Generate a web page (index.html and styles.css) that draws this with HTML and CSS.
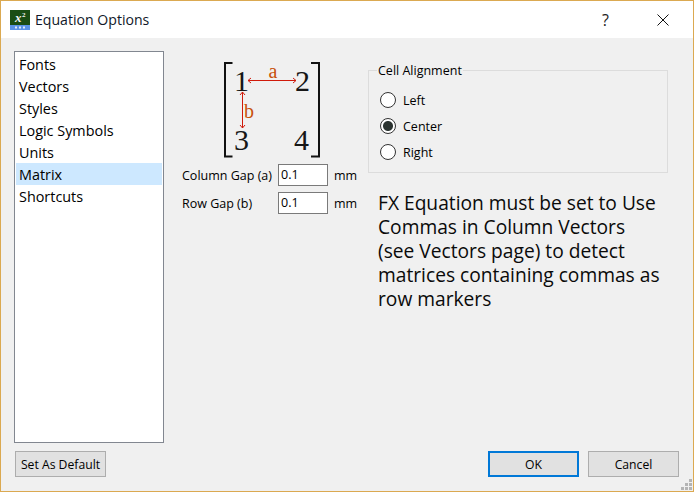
FILE: index.html
```html
<!DOCTYPE html>
<html lang="en">
<head>
<meta charset="utf-8">
<title>Equation Options</title>
<link rel="stylesheet" href="styles.css">
</head>
<body>
<div class="window">
  <header class="titlebar">
    <svg class="app-icon" width="20" height="20" viewBox="0 0 20 20">
      <rect width="20" height="15" fill="#1a4d14"/>
      <rect y="15" width="20" height="5" fill="#5a93e6"/>
      <text x="5" y="12" class="icon-x">x</text>
      <text x="12" y="7" class="icon-sup">2</text>
      <rect x="5" y="16.500" width="2" height="2" fill="#dfe9fa"/>
      <rect x="9" y="16.500" width="2" height="2" fill="#dfe9fa"/>
      <rect x="13" y="16.500" width="2" height="2" fill="#dfe9fa"/>
    </svg>
    <span class="title">Equation Options</span>
    <span class="help">?</span>
    <svg class="close" width="12" height="12" viewBox="0 0 12 12"><path d="M0.500 0.500L11.500 11.500M11.500 0.500L0.500 11.500" stroke="#111" fill="none"/></svg>
  </header>
  <main class="content">
    <ul class="list">
      <li>Fonts</li>
      <li>Vectors</li>
      <li>Styles</li>
      <li>Logic Symbols</li>
      <li>Units</li>
      <li class="selected">Matrix</li>
      <li>Shortcuts</li>
    </ul>
    <section class="matrix-col">
      <svg class="matrix" width="110" height="100" viewBox="0 0 110 100">
        <path d="M9.500 2H2V95.500H9.500M88 2H96V95.500H88" fill="none" stroke="#111" stroke-width="2"/>
        <text x="18.500" y="29.500" class="digit" text-anchor="middle">1</text>
        <text x="79.500" y="29.500" class="digit" text-anchor="middle">2</text>
        <text x="18.500" y="88.500" class="digit" text-anchor="middle">3</text>
        <text x="78.500" y="88.500" class="digit" text-anchor="middle">4</text>
        <text x="50" y="17" class="var" text-anchor="middle">a</text>
        <text x="26" y="57" class="var" text-anchor="middle">b</text>
        <path d="M25 19.500H73M28 17L25 19.500L28 22M70 17L73 19.500L70 22" fill="none" stroke="#d01a0a"/>
        <path d="M19.500 31V67M17 34L19.500 31L22 34M17 64L19.500 67L22 64" fill="none" stroke="#d01a0a"/>
      </svg>
      <div class="gap-row"><label>Column Gap (a)</label><span class="input">0.1</span><span class="unit">mm</span></div>
      <div class="gap-row"><label>Row Gap (b)</label><span class="input">0.1</span><span class="unit">mm</span></div>
    </section>
    <section class="options-col">
      <fieldset class="group">
        <legend>Cell Alignment</legend>
        <div class="radio"><span class="dot"></span>Left</div>
        <div class="radio"><span class="dot on"></span>Center</div>
        <div class="radio"><span class="dot"></span>Right</div>
      </fieldset>
      <p class="note">FX Equation must be set to Use Commas in Column Vectors (see Vectors page) to detect matrices containing commas as row markers</p>
    </section>
  </main>
  <footer class="footer">
    <button class="btn default-btn">Set As Default</button>
    <span class="spacer"></span>
    <button class="btn ok">OK</button>
    <button class="btn">Cancel</button>
  </footer>
  <svg class="grip" width="11" height="11" viewBox="0 0 11 11" fill="#b4b4b4">
    <rect x="8" y="0" width="3" height="3"/><rect x="4" y="4" width="3" height="3"/><rect x="8" y="4" width="3" height="3"/>
    <rect x="0" y="8" width="3" height="3"/><rect x="4" y="8" width="3" height="3"/><rect x="8" y="8" width="3" height="3"/>
  </svg>
</div>
</body>
</html>
```

FILE: styles.css
```css
html, body {
  margin: 0;
  padding: 0;
}
body {
  width: 694px;
  height: 492px;
  overflow: hidden;
  font-family: "Open Sans", "Noto Sans", sans-serif;
  color: #000;
}
.window {
  position: relative;
  box-sizing: border-box;
  width: 694px;
  height: 492px;
  border: 1px solid #dba951;
  background: #f0f0f0;
  display: flex;
  flex-direction: column;
}
.titlebar {
  height: 37px;
  flex: none;
  background: #fff;
  display: flex;
  align-items: center;
  padding-left: 9px;
}
.app-icon {
  flex: none;
  margin-top: 1px;
}
.icon-x {
  font: italic bold 13px "Liberation Serif", serif;
  fill: #f4f4f4;
}
.icon-sup {
  font: bold 7px "Liberation Serif", serif;
  fill: #f4f4f4;
}
.title {
  margin-left: 5px;
  font-size: 14.100px;
  color: #101828;
}
.help {
  margin-left: auto;
  font-size: 16px;
  color: #222;
  margin-right: 48px;
}
.close {
  margin-right: 24px;
  margin-top: 1px;
}
.content {
  flex: none;
  height: 392px;
  margin-top: 13px;
  display: flex;
  padding-left: 13px;
}
.list {
  list-style: none;
  box-sizing: border-box;
  width: 150px;
  height: 392px;
  margin: 0;
  padding: 1px 1px 0;
  background: #fff;
  border: 1px solid #828790;
  font-size: 14.400px;
  flex: none;
}
.list li {
  height: 22px;
  line-height: 23px;
  padding-left: 3px;
}
.list .selected {
  background: #cde8ff;
}
.matrix-col {
  width: 204px;
  flex: none;
  padding-left: 18px;
  box-sizing: border-box;
}
.matrix {
  display: block;
  margin: 10px 0 0 41px;
}
.digit {
  font: 30px "Liberation Serif", serif;
  fill: #161616;
}
.var {
  font: 20px "Liberation Serif", serif;
  fill: #c8500a;
}
.gap-row {
  display: flex;
  align-items: center;
  height: 22px;
  margin-bottom: 6px;
  font-size: 12.500px;
}
.gap-row:first-of-type {
  margin-top: 3px;
}
.gap-row label {
  width: 96px;
  flex: none;
}
.input {
  box-sizing: border-box;
  width: 50px;
  height: 22px;
  line-height: 20px;
  border: 1px solid #7a7a7a;
  background: #fff;
  padding-left: 2px;
  flex: none;
}
.unit {
  margin-left: 6px;
}
.options-col {
  width: 300px;
  flex: none;
}
.group {
  box-sizing: border-box;
  width: 300px;
  height: 111px;
  margin: 11px 0 0;
  padding: 0 0 0 11px;
  border: 1px solid #dcdcdc;
  font-size: 12.500px;
}
.group legend {
  padding: 0 1px;
  margin-left: -3px;
  line-height: 17px;
  margin-bottom: 8px;
}
.radio {
  display: flex;
  align-items: center;
  height: 26px;
}
.dot {
  box-sizing: border-box;
  width: 16px;
  height: 16px;
  border: 1px solid #333;
  border-radius: 50%;
  background: #fff;
  margin-right: 7px;
  flex: none;
}
.dot.on {
  background: radial-gradient(circle, #2b3330 0 4.500px, #fff 5.500px);
}
.note {
  margin: 18px 0 0 10px;
  width: 288px;
  font-size: 19.200px;
  line-height: 24px;
  color: #0a0a0a;
}
.footer {
  flex: none;
  display: flex;
  align-items: flex-start;
  margin-top: 8px;
  padding: 0 14px;
}
.spacer {
  flex: 1;
}
.btn {
  box-sizing: border-box;
  width: 91px;
  height: 26px;
  margin: 0;
  padding: 0;
  border: 1px solid #adadad;
  background: #e1e1e1;
  font: 12.200px "Open Sans", "Noto Sans", sans-serif;
  color: #000;
}
.ok {
  border: 2px solid #0078d7;
  margin-right: 9px;
}
.grip {
  position: absolute;
  right: 1px;
  bottom: 1px;
}
```
